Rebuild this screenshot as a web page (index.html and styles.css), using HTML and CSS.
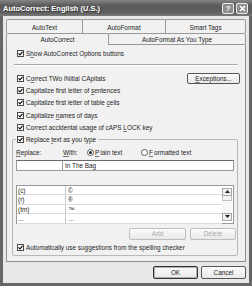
FILE: index.html
```html
<!DOCTYPE html>
<html lang="en">
<head>
    <meta charset="UTF-8">
    <title>AutoCorrect: English (U.S.)</title>
    <link rel="stylesheet" href="styles.css">
</head>
<body>
    <div class="window">
        <div class="titlebar">
            <span class="title">AutoCorrect: English (U.S.)</span>
            <span class="tb-btns">
                <span class="tb-btn">?</span>
                <span class="tb-btn">
                    <svg width="7" height="7" viewBox="0 0 7 7"><path d="M1 1L6 6M6 1L1 6" stroke="#fff" stroke-width="1.6"/></svg>
                </span>
            </span>
        </div>
        <div class="frame">
            <div class="tab-row back">
                <span class="tab t-text">AutoText</span>
                <span class="tab t-format">AutoFormat</span>
                <span class="tab t-tags">Smart Tags</span>
            </div>
            <div class="tab-row front">
                <span class="tab t-correct active">AutoCorrect</span>
                <span class="tab t-asyou">AutoFormat As You Type</span>
            </div>
            <div class="panel">
                <div class="row">
                    <span class="cb"><svg width="5" height="5" viewBox="0 0 5 5"><path d="M0.5 2.3L2 3.8L4.5 0.8" fill="none" stroke="#111" stroke-width="1.2"/></svg></span>
                    <span>S<u>h</u>ow AutoCorrect Options buttons</span>
                </div>
                <div class="sep"></div>
                <div class="opts">
                    <div class="row opt">
                        <span class="cb"><svg width="5" height="5" viewBox="0 0 5 5"><path d="M0.5 2.3L2 3.8L4.5 0.8" fill="none" stroke="#111" stroke-width="1.2"/></svg></span>
                        <span>C<u>o</u>rrect TWo INitial CApitals</span>
                        <span class="btn exc"><u>E</u>xceptions...</span>
                    </div>
                    <div class="row opt">
                        <span class="cb"><svg width="5" height="5" viewBox="0 0 5 5"><path d="M0.5 2.3L2 3.8L4.5 0.8" fill="none" stroke="#111" stroke-width="1.2"/></svg></span>
                        <span>Capitalize first letter of <u>s</u>entences</span>
                    </div>
                    <div class="row opt">
                        <span class="cb"><svg width="5" height="5" viewBox="0 0 5 5"><path d="M0.5 2.3L2 3.8L4.5 0.8" fill="none" stroke="#111" stroke-width="1.2"/></svg></span>
                        <span>Capitalize first letter of table <u>c</u>ells</span>
                    </div>
                    <div class="row opt">
                        <span class="cb"><svg width="5" height="5" viewBox="0 0 5 5"><path d="M0.5 2.3L2 3.8L4.5 0.8" fill="none" stroke="#111" stroke-width="1.2"/></svg></span>
                        <span>Capitalize <u>n</u>ames of days</span>
                    </div>
                    <div class="row opt">
                        <span class="cb"><svg width="5" height="5" viewBox="0 0 5 5"><path d="M0.5 2.3L2 3.8L4.5 0.8" fill="none" stroke="#111" stroke-width="1.2"/></svg></span>
                        <span>Correct accidental usage of cAPS <u>L</u>OCK key</span>
                    </div>
                </div>
                <fieldset class="group">
                    <legend class="legend">
                        <span class="cb"><svg width="5" height="5" viewBox="0 0 5 5"><path d="M0.5 2.3L2 3.8L4.5 0.8" fill="none" stroke="#111" stroke-width="1.2"/></svg></span>
                        <span>Replace <u>t</u>ext as you type</span>
                    </legend>
                    <div class="labels">
                        <span class="lbl-replace"><u>R</u>eplace:</span>
                        <span class="lbl-with"><u>W</u>ith:</span>
                        <span class="radio-wrap plain"><span class="radio on"></span><u>P</u>lain text</span>
                        <span class="radio-wrap"><span class="radio"></span><u>F</u>ormatted text</span>
                    </div>
                    <div class="inputs">
                        <span class="field f-replace"></span>
                        <span class="field f-with">In The Bag</span>
                    </div>
                    <div class="list">
                        <div class="grid">
                            <div class="grid-row"><span class="c1">(c)</span><span class="c2">©</span></div>
                            <div class="grid-row"><span class="c1">(r)</span><span class="c2">®</span></div>
                            <div class="grid-row"><span class="c1">(tm)</span><span class="c2">™</span></div>
                            <div class="grid-row"><span class="c1">...</span><span class="c2">…</span></div>
                        </div>
                        <div class="scroll">
                            <span class="arrow"><svg width="5" height="3" viewBox="0 0 5 3"><path d="M0 3L2.5 0L5 3Z" fill="#222"/></svg></span>
                            <span class="thumb"></span>
                            <span class="track"></span>
                            <span class="arrow"><svg width="5" height="3" viewBox="0 0 5 3"><path d="M0 0L2.5 3L5 0Z" fill="#222"/></svg></span>
                        </div>
                    </div>
                    <div class="btn-row">
                        <span class="btn disabled b-add">Add</span>
                        <span class="btn disabled b-del">Delete</span>
                    </div>
                    <div class="row auto">
                        <span class="cb"><svg width="5" height="5" viewBox="0 0 5 5"><path d="M0.5 2.3L2 3.8L4.5 0.8" fill="none" stroke="#111" stroke-width="1.2"/></svg></span>
                        <span>Automatically use suggestions from the spelling checker</span>
                    </div>
                </fieldset>
            </div>
            <div class="footer">
                <span class="btn big default">OK</span>
                <span class="btn big">Cancel</span>
            </div>
        </div>
    </div>
</body>
</html>
```

FILE: styles.css
```css
body {
    margin: 0;
    font-family: "Liberation Sans", Arial, sans-serif;
    font-size: 6.4px;
    color: #1e1e1e;
    background: #fff;
}
u {
    text-decoration-color: #777;
    text-underline-offset: 1px;
}
.window {
    width: 252px;
    height: 286px;
    display: flex;
    flex-direction: column;
    background: #666;
}
.titlebar {
    height: 16px;
    flex: none;
    display: flex;
    align-items: center;
    justify-content: space-between;
    padding: 0 4px 0 3px;
    background: linear-gradient(#858585, #5a5a5a 35%, #606060 80%, #7a7a7a);
    color: #fff;
}
.title {
    font-size: 7.5px;
    font-weight: bold;
    text-shadow: 1px 1px 0 #3a3a3a;
}
.tb-btns {
    display: flex;
    gap: 2px;
}
.tb-btn {
    width: 12px;
    height: 11px;
    box-sizing: border-box;
    border: 1px solid #eee;
    border-radius: 2px;
    background: #8c8c8c;
    display: flex;
    align-items: center;
    justify-content: center;
    color: #fff;
    font-weight: bold;
    font-size: 8px;
}
.frame {
    flex: 1;
    margin: 0 3px 3px;
    padding: 3px 3px 4px;
    background: #e8e8e8;
    display: flex;
    flex-direction: column;
}
.tab-row {
    display: flex;
}
.tab-row.back {
    height: 14px;
}
.tab-row.front {
    height: 12px;
}
.tab {
    box-sizing: border-box;
    border: 1px solid #9a9a9a;
    border-bottom: none;
    border-radius: 2px 2px 0 0;
    display: flex;
    align-items: center;
    justify-content: center;
    background: #f1f1f1;
}
.back .tab {
    padding-top: 2px;
}
.tab + .tab {
    margin-left: -1px;
}
.t-text { width: 77px; }
.t-format { width: 84px; }
.t-tags { width: 81px; }
.t-correct { width: 103px; }
.t-asyou {
    width: 138px;
    border-bottom: 1px solid #9a9a9a;
}
.panel {
    height: 217px;
    box-sizing: border-box;
    border: 1px solid #8f8f8f;
    border-top: none;
    background: #f1f1f1;
    padding: 2px 7px 0 5px;
}
.row {
    height: 12px;
    display: flex;
    align-items: center;
    gap: 2px;
    padding-left: 5px;
}
.opt {
    height: 12.4px;
}
.cb {
    width: 7px;
    height: 7px;
    box-sizing: border-box;
    border: 1px solid #4a4a4a;
    background: #fff;
    display: flex;
    align-items: center;
    justify-content: center;
    flex: none;
}
.sep {
    margin: 5px 0 6px 2px;
    border-top: 1px solid #a8a8a8;
    border-bottom: 1px solid #fff;
}
.btn {
    box-sizing: border-box;
    border: 1px solid #555;
    border-radius: 2px;
    background: linear-gradient(#fcfcfc, #e8e8e8);
    display: flex;
    align-items: center;
    justify-content: center;
}
.exc {
    margin-left: auto;
    margin-right: -2px;
    width: 53px;
    height: 11px;
}
.group {
    margin: 0;
    padding: 1px 3px 1px;
    border: 1px solid #b8b8b8;
    border-radius: 2px;
}
.legend {
    height: 12px;
    display: flex;
    align-items: center;
    gap: 2px;
    padding: 0 2px 0 1px;
}
.labels {
    height: 12px;
    display: flex;
    align-items: center;
}
.lbl-replace {
    width: 47px;
}
.lbl-with {
    width: 24px;
}
.radio-wrap {
    display: flex;
    align-items: center;
    gap: 1px;
}
.radio-wrap.plain {
    width: 54px;
}
.radio {
    width: 7px;
    height: 7px;
    box-sizing: border-box;
    border: 1px solid #5a5a5a;
    border-radius: 50%;
    background: #fff;
    display: flex;
    align-items: center;
    justify-content: center;
}
.radio.on::after {
    content: "";
    width: 3px;
    height: 3px;
    border-radius: 50%;
    background: #222;
}
.inputs {
    display: flex;
    height: 11px;
    margin-top: 1px;
}
.field {
    box-sizing: border-box;
    border: 1px solid #999;
    border-top-color: #6a6a6a;
    background: #fff;
    display: flex;
    align-items: center;
    padding-left: 2px;
}
.f-replace {
    width: 47px;
}
.f-with {
    flex: 1;
    margin-left: -1px;
}
.list {
    margin-top: 14px;
    height: 39px;
    box-sizing: border-box;
    border: 1px solid #999;
    background: #fff;
    display: flex;
}
.grid {
    flex: 1;
}
.grid-row {
    height: 9.5px;
    box-sizing: border-box;
    border-bottom: 1px solid #dcdcdc;
    display: flex;
    align-items: center;
}
.c1 {
    width: 49px;
    height: 100%;
    box-sizing: border-box;
    border-right: 1px solid #c8c8c8;
    padding-left: 1px;
    display: flex;
    align-items: center;
}
.c2 {
    padding-left: 2px;
}
.scroll {
    width: 10px;
    display: flex;
    flex-direction: column;
    padding: 2px 0;
    margin-right: 1px;
}
.arrow {
    height: 8px;
    box-sizing: border-box;
    border: 1px solid #a8a8a8;
    background: #f0f0f0;
    display: flex;
    align-items: center;
    justify-content: center;
}
.thumb {
    height: 4px;
    border: 1px solid #c0c0c0;
    border-top: none;
    background: #f4f4f4;
}
.track {
    flex: 1;
    background: #f8f8f8;
}
.btn-row {
    display: flex;
    justify-content: flex-end;
    gap: 4px;
    margin: 4px -2px 0 0;
}
.disabled {
    border-color: #bdbdbd;
    color: #a8a8a8;
    height: 12px;
}
.b-add { width: 57px; }
.b-del { width: 46px; }
.auto {
    margin-top: 2px;
    padding-left: 1px;
}
.footer {
    display: flex;
    justify-content: flex-end;
    gap: 3px;
    margin-top: 4px;
}
.big {
    width: 45px;
    height: 13px;
}
.default {
    border-color: #333;
    box-shadow: inset 0 0 0 1px #b0b0b0;
}
```
